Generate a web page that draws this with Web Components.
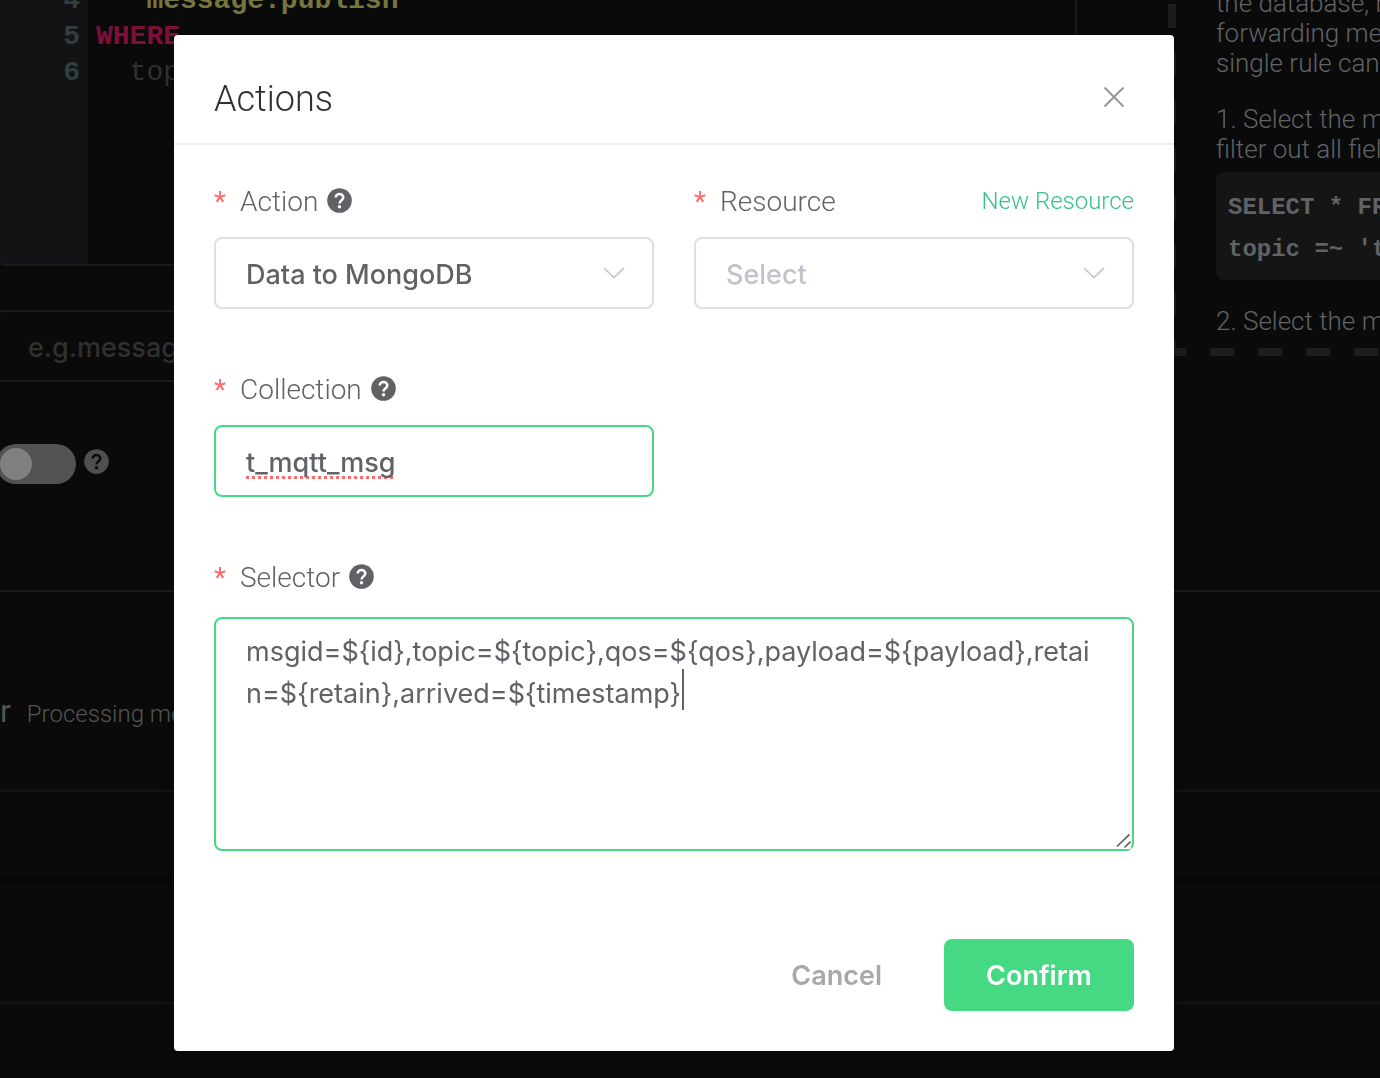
<!DOCTYPE html>
<html lang="en">
<head>
<meta charset="utf-8">
<title>Rules</title>
<style>
  body {
    margin: 0;
    background: #0a0a0a;
    overflow: hidden;
    font-family: Roboto, "Liberation Sans", sans-serif;
    font-weight: 300;
    --ui-font: Inter, "Liberation Sans", sans-serif;
    --ui-size: 27px;
    --mono: "Liberation Mono", monospace;
    --green: #45d983;
  }
</style>
</head>
<body>
<rule-page>
  <code-editor slot="editor"></code-editor>
  <rule-tips slot="tips"></rule-tips>
</rule-page>

<modal-dialog heading="Actions">
  <form-field kind="select" label="Action" value="Data to MongoDB" help></form-field>
  <form-field kind="select" label="Resource" placeholder="Select">
    <action-link slot="extra">New Resource</action-link>
  </form-field>
  <form-field kind="input" label="Collection" value="t_mqtt_msg" help active></form-field>
  <form-field class="wide" kind="textarea" label="Selector" help active
    value="msgid=${id},topic=${topic},qos=${qos},payload=${payload},retain=${retain},arrived=${timestamp}"></form-field>
  <ui-button slot="footer" variant="text">Cancel</ui-button>
  <ui-button slot="footer" variant="primary">Confirm</ui-button>
</modal-dialog>

<script>
class BaseElement extends HTMLElement {
  constructor() {
    super();
    this.root = this.attachShadow({ mode: 'open' });
  }

  connectedCallback() {
    this.root.innerHTML = `<style>:host, * { box-sizing: border-box; }${this.styles()}</style>${this.render()}`;
  }

  styles() { return ''; }
  render() { return '<slot></slot>'; }
}

class HelpIcon extends BaseElement {
  styles() {
    return `
      :host { display: block; width: 25px; height: 25px; color: #606266; --mark: #fff; }
      :host([dim]) { color: #4f4f4f; --mark: #0a0a0a; }
      svg { display: block; }
    `;
  }

  render() {
    return `
      <svg width="25" height="25" viewBox="0 0 25 25" aria-hidden="true">
        <circle cx="12.5" cy="12.5" r="12.3" fill="currentColor"/>
        <path d="M8.7 9.6 C8.7 4.9 16.3 4.9 16.3 9.6 C16.3 12.2 12.5 12.2 12.5 15.6" fill="none" stroke="var(--mark)" stroke-width="2.5"/>
        <circle cx="12.5" cy="18.7" r="1.7" fill="var(--mark)"/>
      </svg>`;
  }
}
customElements.define('help-icon', HelpIcon);

class CodeEditor extends BaseElement {
  styles() {
    return `
      :host {
        display: flex;
        height: 266px;
        overflow: hidden;
        border: 2px solid #1a1a1b;
        border-top: 0;
        border-radius: 0 0 10px 10px;
        font: 400 28px/36px var(--mono);
      }
      .gutter {
        width: 90px;
        padding-right: 8px;
        background: #131315;
        color: #303e40;
        text-align: right;
      }
      .lines { margin-top: -17px; }
      .gutter .lines { font-weight: 700; }
      .code { padding-left: 8px; white-space: pre; color: #303030; }
      .string { color: #76773e; font-weight: 700; }
      .keyword { color: #7d1038; font-weight: 700; }
    `;
  }

  render() {
    return `
      <div class="gutter"><div class="lines"><div>4</div><div>5</div><div>6</div></div></div>
      <div class="code"><div class="lines"><div class="string">  "message.publish"</div><div class="keyword">WHERE</div><div>  top</div></div></div>`;
  }
}
customElements.define('code-editor', CodeEditor);

class RuleTips extends BaseElement {
  styles() {
    return `
      :host {
        display: block;
        height: 356px;
        overflow: hidden;
        padding: 0 0 16px 48px;
        color: #606266;
        font-size: 26px;
        line-height: 30px;
        white-space: nowrap;
        background:
          repeating-linear-gradient(to bottom, transparent 0 4px, #1c1c1e 4px 28px, transparent 28px 48px) left top / 8px 348px no-repeat,
          repeating-linear-gradient(to right, #1c1c1e 0 18px, transparent 18px 42px, #1c1c1e 42px 48px) left bottom / 100% 8px no-repeat;
      }
      .text { height: 340px; overflow: hidden; }
      p { margin: 0 0 26px; }
      p:first-child { margin-top: -12px; }
      p.lead { margin-bottom: 8px; }
      pre {
        margin: 0 0 26px;
        padding: 15px 12px 9px;
        border-radius: 8px 0 0 8px;
        background: #151515;
        font: 700 24px/42px var(--mono);
      }
    `;
  }

  render() {
    return `
      <div class="text">
        <p>the database, r<br>forwarding me<br>single rule can</p>
        <p class="lead">1. Select the m<br>filter out all fiel</p>
        <pre>SELECT * FR
topic =~ 't</pre>
        <p>2. Select the m<br>filter out all fiel</p>
      </div>`;
  }
}
customElements.define('rule-tips', RuleTips);

class RulePage extends BaseElement {
  styles() {
    return `
      :host { display: block; height: 100vh; overflow: hidden; }
      .top {
        display: grid;
        grid-template-columns: minmax(0, 1fr) 212px;
        column-gap: 91px;
        margin-left: -4px;
        height: 590px;
      }
      .event {
        display: block;
        width: 100%;
        height: 72px;
        margin: 44px 0 62px;
        padding: 2px 30px 0;
        border: 2px solid #1a1a1b;
        border-radius: 8px;
        background: none;
        font: 500 var(--ui-size) var(--ui-font);
      }
      .event::placeholder { color: #303030; opacity: 1; }
      .toggle { display: flex; gap: 8px; align-items: center; }
      .toggle help-icon { margin-bottom: 5px; }
      .toggle input {
        appearance: none;
        width: 80px;
        height: 40px;
        margin: 0;
        padding: 4px;
        border-radius: 20px;
        background: #525252;
      }
      .toggle input::before {
        content: "";
        display: block;
        width: 32px;
        height: 32px;
        border-radius: 50%;
        background: #808080;
      }
      .handler {
        display: flex;
        align-items: baseline;
        gap: 16px;
        height: 202px;
        padding-top: 98px;
        border: 2px solid #1a1a1b;
        border-width: 2px 0;
        border-bottom-color: #131313;
        color: #545454;
        line-height: 42px;
        white-space: nowrap;
      }
      h2 { margin: 0; font-size: 32px; font-weight: 400; }
      .handler span { font-size: 24px; }
      .row { height: 86px; }
      .card { height: 126px; border-top: 4px solid #060606; border-bottom: 2px solid #131313; }
    `;
  }

  render() {
    return `
      <div class="top">
        <div>
          <slot name="editor"></slot>
          <input class="event" placeholder="e.g.messag" aria-label="Event">
          <div class="toggle">
            <input type="checkbox" role="switch" aria-label="Enable">
            <help-icon dim></help-icon>
          </div>
        </div>
        <slot name="tips"></slot>
      </div>
      <div class="handler"><h2>r</h2><span>Processing me</span></div>
      <div class="row"></div>
      <div class="card"></div>`;
  }
}
customElements.define('rule-page', RulePage);

class ActionLink extends BaseElement {
  styles() {
    return `
      :host { display: block; padding-bottom: 4px; }
      a { color: #34c388; font-size: 24px; text-decoration: none; }
    `;
  }

  render() {
    return '<a href="#"><slot></slot></a>';
  }
}
customElements.define('action-link', ActionLink);

class UiButton extends BaseElement {
  styles() {
    return `
      :host { display: block; }
      button {
        height: 72px;
        padding: 0 42px;
        border: 0;
        border-radius: 8px;
        background: none;
        color: #a8a8a8;
        font: 600 var(--ui-size) var(--ui-font);
        cursor: pointer;
      }
      :host([variant="text"]) button { padding: 0 20px; }
      :host([variant="primary"]) button { min-width: 190px; background: var(--green); color: #fff; }
    `;
  }

  render() {
    return '<button type="button"><slot></slot></button>';
  }
}
customElements.define('ui-button', UiButton);

class FormField extends BaseElement {
  styles() {
    return `
      :host { display: block; min-width: 0; }
      :host(.wide) { grid-column: 1 / -1; }
      .head { display: flex; align-items: center; height: 72px; color: #606266; font-size: 28px; }
      .star { width: 26px; color: #ff6b6b; font-weight: 400; }
      help-icon { margin: 0 0 2px 9px; }
      slot { display: block; margin-left: auto; }
      .box { position: relative; }
      input, select, textarea {
        display: block;
        width: 100%;
        height: 72px;
        margin: 0;
        padding: 2px 30px 0;
        border: 2px solid #dcdfe6;
        border-radius: 8px;
        outline: 0;
        background: #fff;
        color: #606266;
        font: 500 var(--ui-size) var(--ui-font);
        appearance: none;
      }
      :host([active]) :is(input, textarea) { border-color: var(--green); }
      :host([placeholder]) select { color: #c0c4cc; }
      input { text-decoration: underline dotted #ff6b6b 3px; text-underline-offset: 4px; text-decoration-skip-ink: none; }
      textarea {
        height: 234px;
        margin-top: 4px;
        padding: 12px 30px;
        font-weight: 400;
        line-height: 42px;
        word-break: break-all;
        resize: vertical;
      }
      .arrow { position: absolute; right: 28px; top: 28px; pointer-events: none; }
      .grip { position: absolute; right: 3px; bottom: 2px; background: #fff; pointer-events: none; }
      .caret { position: absolute; left: 468px; top: 52px; width: 2px; height: 41px; background: #606266; }
    `;
  }

  control() {
    const value = this.getAttribute('value') || '';
    switch (this.getAttribute('kind')) {
      case 'select':
        return `
          <select id="control"><option>${value || this.getAttribute('placeholder')}</option></select>
          <svg class="arrow" width="24" height="16" viewBox="0 0 24 16" fill="none" stroke="#c0c4cc" stroke-width="1.7">
            <path d="M2 3 L12 12.5 L22 3"/>
          </svg>`;
      case 'textarea':
        return `
          <textarea id="control" spellcheck="false">${value}</textarea>
          <div class="caret"></div>
          <svg class="grip" width="15" height="15" viewBox="0 0 15 15" stroke="#606060" stroke-width="1.7" stroke-linecap="round">
            <path d="M1.5 12 L13 .9 M9 13 L14 8.2"/>
          </svg>`;
      default:
        return `<input id="control" type="text" spellcheck="false" value="${value}">`;
    }
  }

  render() {
    return `
      <div class="head">
        <span class="star">*</span>
        <label for="control">${this.getAttribute('label')}</label>
        ${this.hasAttribute('help') ? '<help-icon></help-icon>' : ''}
        <slot name="extra"></slot>
      </div>
      <div class="box">${this.control()}</div>`;
  }
}
customElements.define('form-field', FormField);

class ModalDialog extends BaseElement {
  styles() {
    return `
      :host {
        position: fixed;
        inset: 0;
        display: flex;
        justify-content: center;
        align-items: flex-start;
        padding: 35px 32px 0 0;
      }
      .dialog {
        width: 100%;
        max-width: 1000px;
        border-radius: 4px;
        background: #fff;
        box-shadow: 0 2px 6px rgba(0, 0, 0, 0.3);
      }
      header {
        display: flex;
        justify-content: space-between;
        align-items: center;
        height: 110px;
        padding: 20px 40px 0;
        border-bottom: 2px solid #eee;
      }
      h1 { margin: 0; color: #303133; font-size: 36px; font-weight: 300; }
      .close { display: block; margin-bottom: 4px; padding: 0; border: 0; background: none; }
      .close svg { display: block; }
      .body {
        display: grid;
        grid-template-columns: repeat(2, minmax(0, 1fr));
        gap: 44px 40px;
        padding: 20px 40px 0;
      }
      footer { display: flex; justify-content: flex-end; gap: 42px; padding: 88px 40px 40px; }
    `;
  }

  render() {
    return `
      <div class="dialog" role="dialog" aria-label="${this.getAttribute('heading')}">
        <header>
          <h1>${this.getAttribute('heading')}</h1>
          <button class="close" type="button" aria-label="Close">
            <svg width="40" height="24" viewBox="0 0 40 24" stroke="#909399" stroke-width="1.8">
              <path d="M10.5 2.5 L29.5 21.5 M29.5 2.5 L10.5 21.5"/>
            </svg>
          </button>
        </header>
        <div class="body"><slot></slot></div>
        <footer><slot name="footer"></slot></footer>
      </div>`;
  }
}
customElements.define('modal-dialog', ModalDialog);
</script>
</body>
</html>
